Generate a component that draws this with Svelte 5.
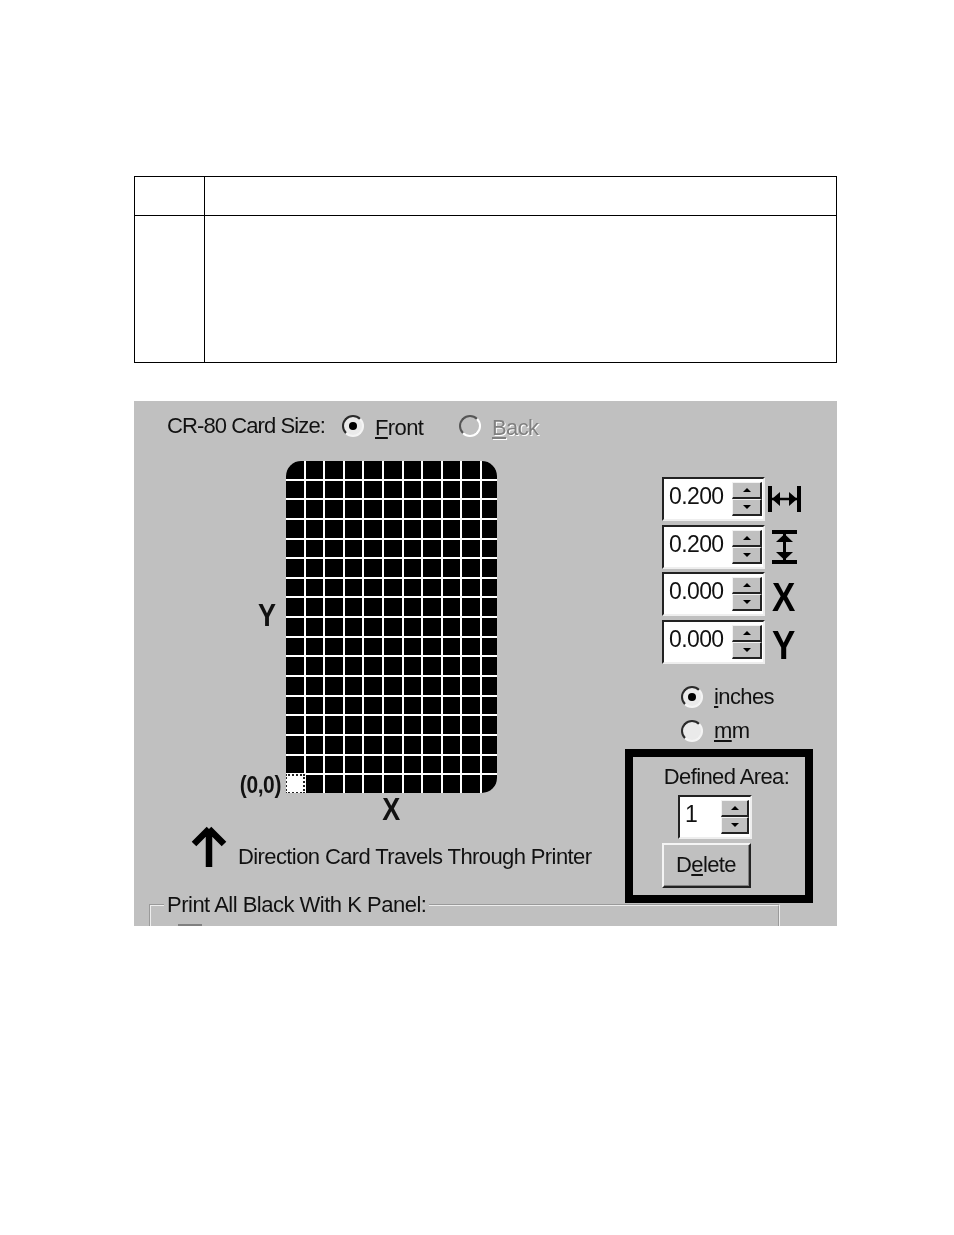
<script>
	const spinners = [
		{ value: '0.200', icon: 'width' },
		{ value: '0.200', icon: 'height' },
		{ value: '0.000', icon: 'X' },
		{ value: '0.000', icon: 'Y' }
	];
	const cells = Array.from({ length: 17 * 11 }, (_, i) => i);
	// bottom-left cell is the selected one
	const selected = 16 * 11;
</script>

{#snippet arrows()}
	<span class="arrows">
		<span class="arrow-btn"><i class="tri up"></i></span>
		<span class="arrow-btn"><i class="tri down"></i></span>
	</span>
{/snippet}

<div class="page">
	<table class="blank-table">
		<tbody>
			<tr class="head-row"><td class="narrow"></td><td></td></tr>
			<tr class="body-row"><td class="narrow"></td><td></td></tr>
		</tbody>
	</table>

	<div class="dialog">
		<div class="top">
			<div class="left">
				<div class="size-row">
					<span class="size-label">CR-80 Card Size:</span>
					<span class="radio on"></span>
					<span class="opt front"><u>F</u>ront</span>
					<span class="radio off"></span>
					<span class="opt back"><u>B</u>ack</span>
				</div>

				<div class="card-row">
					<div class="rail">
						<span class="axis-y">Y</span>
						<span class="origin">(0,0)</span>
					</div>
					<div class="card">
						{#each cells as c}
							<span class="cell" class:selected={c === selected}></span>
						{/each}
					</div>
				</div>
				<div class="axis-x"><span>X</span></div>

				<div class="direction">
					<svg width="36" height="41" viewBox="0 0 36 41">
						<path d="M18 3 L3 18 M18 3 L33 18 M18 3 V41" fill="none" stroke="#000" stroke-width="6.5" />
					</svg>
					<span>Direction Card Travels Through Printer</span>
				</div>
			</div>

			<div class="right">
				<div class="spin-list">
					{#each spinners as s}
						<div class="spin-row">
							<div class="spin">
								<span class="spin-value">{s.value}</span>
								{@render arrows()}
							</div>
							{#if s.icon === 'width'}
								<svg class="dim-w" width="33" height="26" viewBox="0 0 33 26">
									<path d="M2 0 V26 M31 0 V26" stroke="#000" stroke-width="4" />
									<path d="M4 13 H29" stroke="#000" stroke-width="2.5" />
									<path d="M4 13 L12 6 V20 Z M29 13 L21 6 V20 Z" fill="#000" />
								</svg>
							{:else if s.icon === 'height'}
								<svg class="dim-h" width="25" height="34" viewBox="0 0 25 34">
									<path d="M0 2 H25 M0 32 H25" stroke="#000" stroke-width="4" />
									<path d="M12.5 4 V30" stroke="#000" stroke-width="3" />
									<path d="M12.5 4 L4 12 H21 Z M12.5 30 L4 22 H21 Z" fill="#000" />
								</svg>
							{:else}
								<span class="dim-letter">{s.icon}</span>
							{/if}
						</div>
					{/each}
				</div>

				<div class="units">
					<div class="unit"><span class="radio on"></span><span class="opt"><u>i</u>nches</span></div>
					<div class="unit"><span class="radio"></span><span class="opt"><u>m</u>m</span></div>
				</div>

				<div class="defined">
					<div class="defined-label">Defined Area:</div>
					<div class="spin small">
						<span class="spin-value">1</span>
						{@render arrows()}
					</div>
					<div class="delete">D<u>e</u>lete</div>
				</div>
			</div>
		</div>

		<fieldset class="group">
			<legend>Print All Black With K Panel:</legend>
			<span class="check"></span>
		</fieldset>
	</div>
</div>

<style>
	:global(body) {
		margin: 0;
		background: #fff;
	}

	.page {
		height: 1235px;
		box-sizing: border-box;
		padding: 176px 0 0 134px;
		font-family: 'Liberation Sans', Arial, sans-serif;
		color: #111;
		overflow: hidden;
	}

	.blank-table {
		width: 703px;
		height: 187px;
		border-collapse: collapse;
		table-layout: fixed;
	}

	.blank-table td {
		border: 1px solid #000;
		padding: 0;
	}

	.narrow {
		width: 69px;
	}

	.head-row {
		height: 39px;
	}

	.dialog {
		width: 703px;
		height: 525px;
		margin-top: 38px;
		background: #c0c0c0;
		overflow: hidden;
		font-size: 22px;
		line-height: 24px;
		letter-spacing: -0.6px;
		filter: blur(0.45px);
	}

	.top {
		display: flex;
		height: 499px;
	}

	.left {
		width: 491px;
		flex: none;
	}

	.size-row {
		display: flex;
		align-items: center;
		height: 26px;
		padding: 12px 0 0 33px;
	}

	.size-label {
		width: 175px;
		flex: none;
		letter-spacing: -0.9px;
	}

	.opt {
		margin-left: 11px;
	}

	.front {
		width: 84px;
		flex: none;
		position: relative;
		top: 2px;
	}

	.back {
		color: #808080;
		text-shadow: 1px 1px 0 #fff;
		position: relative;
		top: 2px;
	}

	.radio {
		width: 22px;
		height: 22px;
		box-sizing: border-box;
		flex: none;
		display: flex;
		align-items: center;
		justify-content: center;
		border-radius: 50%;
		border: 2.5px solid;
		border-color: #2a2a2a #f4f4f4 #f4f4f4 #2a2a2a;
		background: #eaeaea;
	}

	.radio.off {
		background: #c0c0c0;
		border-color: #555 #fff #fff #555;
	}

	.radio.on::after {
		content: '';
		width: 8px;
		height: 8px;
		border-radius: 50%;
		background: #000;
	}

	.card-row {
		display: flex;
		margin-top: 22px;
	}

	.rail {
		width: 152px;
		height: 332px;
		flex: none;
		display: flex;
		flex-direction: column;
		align-items: flex-end;
	}

	.axis-y {
		display: block;
		margin: 139px 10px 0 0;
		font-size: 27px;
		font-weight: bold;
		line-height: 32px;
		letter-spacing: 0;
		transform: scaleY(1.15);
	}

	.origin {
		margin: auto 5px -4px 0;
		font-size: 21px;
		font-weight: bold;
		letter-spacing: -0.4px;
		transform: scaleY(1.1);
	}

	.card {
		display: grid;
		grid-template-columns: repeat(10, 17.6px) 15px;
		grid-template-rows: repeat(17, 17.65px);
		gap: 2px;
		width: 211px;
		height: 332px;
		background: #fff;
		border-radius: 15px 15px 15px 0;
		overflow: hidden;
	}

	.cell {
		background: #000;
	}

	.cell.selected {
		background: #fff;
		outline: 2px dotted #222;
		outline-offset: -1px;
	}

	.axis-x {
		margin: 1px 0 0 152px;
		width: 210px;
		text-align: center;
		font-size: 27px;
		font-weight: bold;
		line-height: 32px;
	}

	.axis-x span {
		display: inline-block;
		transform: scaleY(1.15);
	}

	.direction {
		display: flex;
		align-items: flex-end;
		gap: 11px;
		margin: 0 0 0 57px;
		line-height: 26px;
	}

	.direction span {
		margin-bottom: -3px;
		white-space: nowrap;
	}

	.right {
		flex: 1;
		min-width: 0;
		box-sizing: border-box;
	}

	.spin-list {
		display: flex;
		flex-direction: column;
		gap: 3.5px;
		margin: 76px 0 0 37px;
	}

	.spin-row {
		display: flex;
		align-items: center;
		gap: 3px;
		height: 44px;
	}

	.spin {
		display: flex;
		justify-content: space-between;
		box-sizing: border-box;
		width: 103px;
		height: 44px;
		flex: none;
		padding: 3px 1px 3px 5px;
		background: #fff;
		border: 2px solid;
		border-color: #222 #eee #eee #222;
	}

	.spin-value {
		font-size: 23px;
		line-height: 28px;
		letter-spacing: -0.6px;
	}

	.arrows {
		display: flex;
		flex-direction: column;
		justify-content: space-between;
		width: 30px;
	}

	.arrow-btn {
		flex: 1;
		display: flex;
		align-items: center;
		justify-content: center;
		background: #c0c0c0;
		border-style: solid;
		border-width: 1px 2px 2px 1px;
		border-color: #f2f2f2 #222 #222 #f2f2f2;
	}

	.tri {
		width: 0;
		height: 0;
		border-left: 4px solid transparent;
		border-right: 4px solid transparent;
	}

	.tri.up {
		border-bottom: 4px solid #000;
	}

	.tri.down {
		border-top: 4px solid #000;
	}

	.dim-h {
		margin-left: 4px;
	}

	.dim-letter {
		display: block;
		margin: 6px 0 0 4px;
		font-size: 35px;
		line-height: 34px;
		font-weight: bold;
		letter-spacing: 0;
		color: #000;
		transform: scaleY(1.17);
	}

	.units {
		display: flex;
		flex-direction: column;
		gap: 12px;
		margin: 22px 0 0 56px;
	}

	.unit {
		display: flex;
		align-items: center;
		height: 22px;
	}

	.defined {
		display: flex;
		flex-direction: column;
		align-items: center;
		box-sizing: border-box;
		width: 188px;
		height: 154px;
		margin: 7px 0 0 0;
		padding-top: 8px;
		border: 8px solid #000;
	}

	.defined-label {
		margin-left: 15px;
		line-height: 24px;
		white-space: nowrap;
	}

	.spin.small {
		width: 74px;
		height: 44px;
		margin: 6px 0 0 -8px;
	}

	.spin.small .arrows {
		width: 28px;
	}

	.delete {
		box-sizing: border-box;
		width: 89px;
		height: 45px;
		margin: 4px 0 0 -26px;
		display: flex;
		align-items: center;
		justify-content: center;
		white-space: pre;
		background: #c0c0c0;
		border-style: solid;
		border-width: 2px;
		border-color: #f4f4f4 #222 #222 #f4f4f4;
		box-shadow: inset -1px -1px 0 #808080;
	}

	.group {
		box-sizing: border-box;
		width: 631px;
		height: 60px;
		margin: -7px 0 0 15px;
		padding: 0;
		border: 2px groove #eee;
	}

	.group legend {
		margin-left: 13px;
		padding: 0 3px;
		line-height: 24px;
		letter-spacing: -0.5px;
	}

	.check {
		display: block;
		width: 24px;
		height: 24px;
		margin: 7px 0 0 27px;
		background: #808080;
	}
</style>
